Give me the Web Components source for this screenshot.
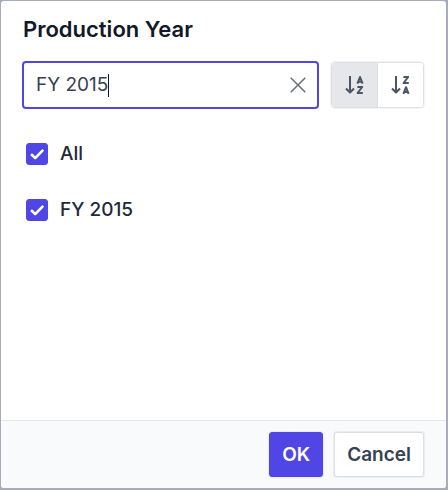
<!DOCTYPE html>
<html lang="en">
<head>
<meta charset="utf-8">
<meta name="viewport" content="width=device-width, initial-scale=1">
<title>Production Year</title>
<style>
    :root {
        --theme-colour: #4f46e5;
        --text-colour: #374151;
        --line-colour: #dcdfe4;
    }

    * {
        box-sizing: border-box;
    }

    body {
        margin: 0;
        min-height: 100vh;
        display: flex;
        padding: 1px 2px 2px 1px;
        background: #a8abb9;
        font-family: Inter, "Liberation Sans", sans-serif;
        color: var(--text-colour);
    }
</style>
</head>
<body>

<filter-dialog>
    <span slot="title">Production Year</span>
    <search-field slot="tools" value="FY 2015"></search-field>
    <sort-toggle slot="tools"></sort-toggle>
    <check-item>All</check-item>
    <check-item>FY 2015</check-item>
    <dialog-button slot="actions" kind="primary">OK</dialog-button>
    <dialog-button slot="actions">Cancel</dialog-button>
</filter-dialog>

<script>
const makeTemplate = (html) => {
    const template = document.createElement('template')
    template.innerHTML = html
    return template
}

const dialogTemplate = makeTemplate(`
    <style>
        :host {
            flex: 1;
            min-width: 0;
            display: flex;
            flex-direction: column;
            background: #fff;
            border-radius: 3px;
            overflow: hidden;
        }

        h2 {
            margin: 0;
            padding: 14px 22px 0;
            font-size: 22px;
            line-height: 28px;
            font-weight: 600;
            color: #111827;
        }

        .tools {
            display: flex;
            align-items: center;
            gap: 12px;
            padding: 18px 22px 0 21px;
        }

        .list {
            flex: 1;
            display: flex;
            flex-direction: column;
            gap: 28px;
            padding: 31px 25px;
        }

        footer {
            display: flex;
            justify-content: flex-end;
            gap: 11px;
            padding: 11px 22px;
            border-top: 1px solid #e5e7eb;
            background: #f9fafc;
        }
    </style>

    <h2><slot name="title"></slot></h2>
    <div class="tools"><slot name="tools"></slot></div>
    <div class="list"><slot></slot></div>
    <footer><slot name="actions"></slot></footer>
`)

class FilterDialog extends HTMLElement {
    constructor() {
        super()
        this.attachShadow({mode: 'open'})
        this.shadowRoot.appendChild(dialogTemplate.content.cloneNode(true))
    }
}

/**
 * the input grows with its text, so the caret line
 * that follows it always stands right behind the last letter
 */
const searchTemplate = makeTemplate(`
    <style>
        :host {
            flex: 1;
            min-width: 0;
            display: block;
        }

        .box {
            box-sizing: border-box;
            display: flex;
            align-items: center;
            height: 48px;
            padding: 0 10px 0 12px;
            border: 2px solid var(--theme-colour);
            border-radius: 4px;
            background: #fff;
        }

        input {
            field-sizing: content;
            min-width: 1px;
            max-width: 85%;
            padding: 0;
            border: none;
            outline: none;
            background: none;
            font: 400 19px/28px Inter, "Liberation Sans", sans-serif;
            color: var(--text-colour);
            caret-color: transparent;
        }

        .caret {
            width: 1px;
            height: 23px;
            background: #111827;
        }

        button {
            display: flex;
            margin-left: auto;
            padding: 0;
            border: none;
            background: none;
            color: #6b7280;
            cursor: pointer;
        }
    </style>

    <div class="box">
        <input type="text" aria-label="Search values">
        <span class="caret"></span>
        <button type="button" aria-label="Clear">
            <svg width="18" height="18" viewBox="0 0 18 18" fill="none" stroke="currentColor" stroke-width="1.6" stroke-linecap="round">
                <path d="M2.2 2.2 15.8 15.8M15.8 2.2 2.2 15.8"/>
            </svg>
        </button>
    </div>
`)

class SearchField extends HTMLElement {
    constructor() {
        super()
        this.attachShadow({mode: 'open'})
        this.shadowRoot.appendChild(searchTemplate.content.cloneNode(true))
    }

    connectedCallback() {
        const input = this.shadowRoot.querySelector('input')
        input.value = this.getAttribute('value') || ''
        this.shadowRoot.querySelector('button').addEventListener('click', () => {
            input.value = ''
            input.focus()
        })
    }
}

const sortTemplate = makeTemplate(`
    <style>
        :host {
            display: flex;
        }

        .group {
            box-sizing: border-box;
            display: flex;
            height: 46px;
            border: 1px solid var(--line-colour);
            border-radius: 4px;
            overflow: hidden;
            box-shadow: 0 0 1px 1px rgba(0, 0, 0, 0.05);
        }

        button {
            display: flex;
            align-items: center;
            justify-content: center;
            width: 45px;
            padding: 0;
            border: none;
            background: #fff;
            color: #4b5563;
            cursor: pointer;
        }

        button + button {
            width: 46px;
            border-left: 1px solid var(--line-colour);
        }

        button[aria-pressed="true"] {
            background: #e5e7eb;
        }

        svg {
            fill: none;
            stroke: currentColor;
            stroke-width: 2;
            stroke-linejoin: round;
        }
    </style>

    <div class="group" role="group" aria-label="Sort order">
        <button type="button" aria-pressed="true" aria-label="Sort ascending">
            <svg width="20" height="20" viewBox="0 0 20 20">
                <path d="M5 1V17M1 13.5 5 17.5 9 13.5"/>
                <path d="M12.4 8.6 15 2 17.6 8.6M13.2 6.8H16.8M12.4 12H17.2L12.6 18H17.8"/>
            </svg>
        </button>
        <button type="button" aria-pressed="false" aria-label="Sort descending">
            <svg width="20" height="20" viewBox="0 0 20 20">
                <path d="M5 1V17M1 13.5 5 17.5 9 13.5"/>
                <path d="M12.4 2H17.2L12.6 8H17.8M12.4 18.8 15 12.2 17.6 18.8M13.2 17H16.8"/>
            </svg>
        </button>
    </div>
`)

class SortToggle extends HTMLElement {
    constructor() {
        super()
        this.attachShadow({mode: 'open'})
        this.shadowRoot.appendChild(sortTemplate.content.cloneNode(true))
    }

    connectedCallback() {
        const buttons = this.shadowRoot.querySelectorAll('button')
        buttons.forEach((button) => {
            button.addEventListener('click', () => {
                buttons.forEach((b) => b.setAttribute('aria-pressed', b === button))
            })
        })
    }
}

const checkTemplate = makeTemplate(`
    <style>
        :host {
            display: block;
        }

        label {
            display: flex;
            align-items: center;
            gap: 12px;
            font-size: 19px;
            line-height: 28px;
            font-weight: 500;
            color: #1f2937;
            cursor: pointer;
        }

        .tick {
            display: grid;
        }

        input, svg {
            grid-area: 1 / 1;
            width: 22px;
            height: 22px;
        }

        input {
            appearance: none;
            margin: 0;
            border: 1px solid #9ca3af;
            border-radius: 3px;
            background: #fff;
        }

        input:checked {
            border-color: var(--theme-colour);
            background: var(--theme-colour);
        }

        svg {
            pointer-events: none;
            fill: none;
            stroke: #fff;
            stroke-width: 2.6;
            stroke-linecap: round;
            stroke-linejoin: round;
        }

        input:not(:checked) + svg {
            visibility: hidden;
        }
    </style>

    <label>
        <span class="tick">
            <input type="checkbox" checked>
            <svg viewBox="0 0 22 22"><path d="M5.8 11.8 9.2 15.1 16.5 7.6"/></svg>
        </span>
        <slot></slot>
    </label>
`)

class CheckItem extends HTMLElement {
    constructor() {
        super()
        this.attachShadow({mode: 'open'})
        this.shadowRoot.appendChild(checkTemplate.content.cloneNode(true))
    }
}

const buttonTemplate = makeTemplate(`
    <style>
        :host {
            display: block;
        }

        button {
            height: 45px;
            padding: 0 12px;
            border: 1px solid var(--line-colour);
            border-radius: 3px;
            background: #fff;
            box-shadow: 0 0 1px 1px rgba(0, 0, 0, 0.06);
            font: 600 19px/28px Inter, "Liberation Sans", sans-serif;
            color: var(--text-colour);
            cursor: pointer;
        }

        :host([kind="primary"]) button {
            border-color: var(--theme-colour);
            background: var(--theme-colour);
            color: #fff;
        }
    </style>

    <button type="button"><slot></slot></button>
`)

class DialogButton extends HTMLElement {
    constructor() {
        super()
        this.attachShadow({mode: 'open'})
        this.shadowRoot.appendChild(buttonTemplate.content.cloneNode(true))
    }
}

window.customElements.define('filter-dialog', FilterDialog)
window.customElements.define('search-field', SearchField)
window.customElements.define('sort-toggle', SortToggle)
window.customElements.define('check-item', CheckItem)
window.customElements.define('dialog-button', DialogButton)
</script>
</body>
</html>
